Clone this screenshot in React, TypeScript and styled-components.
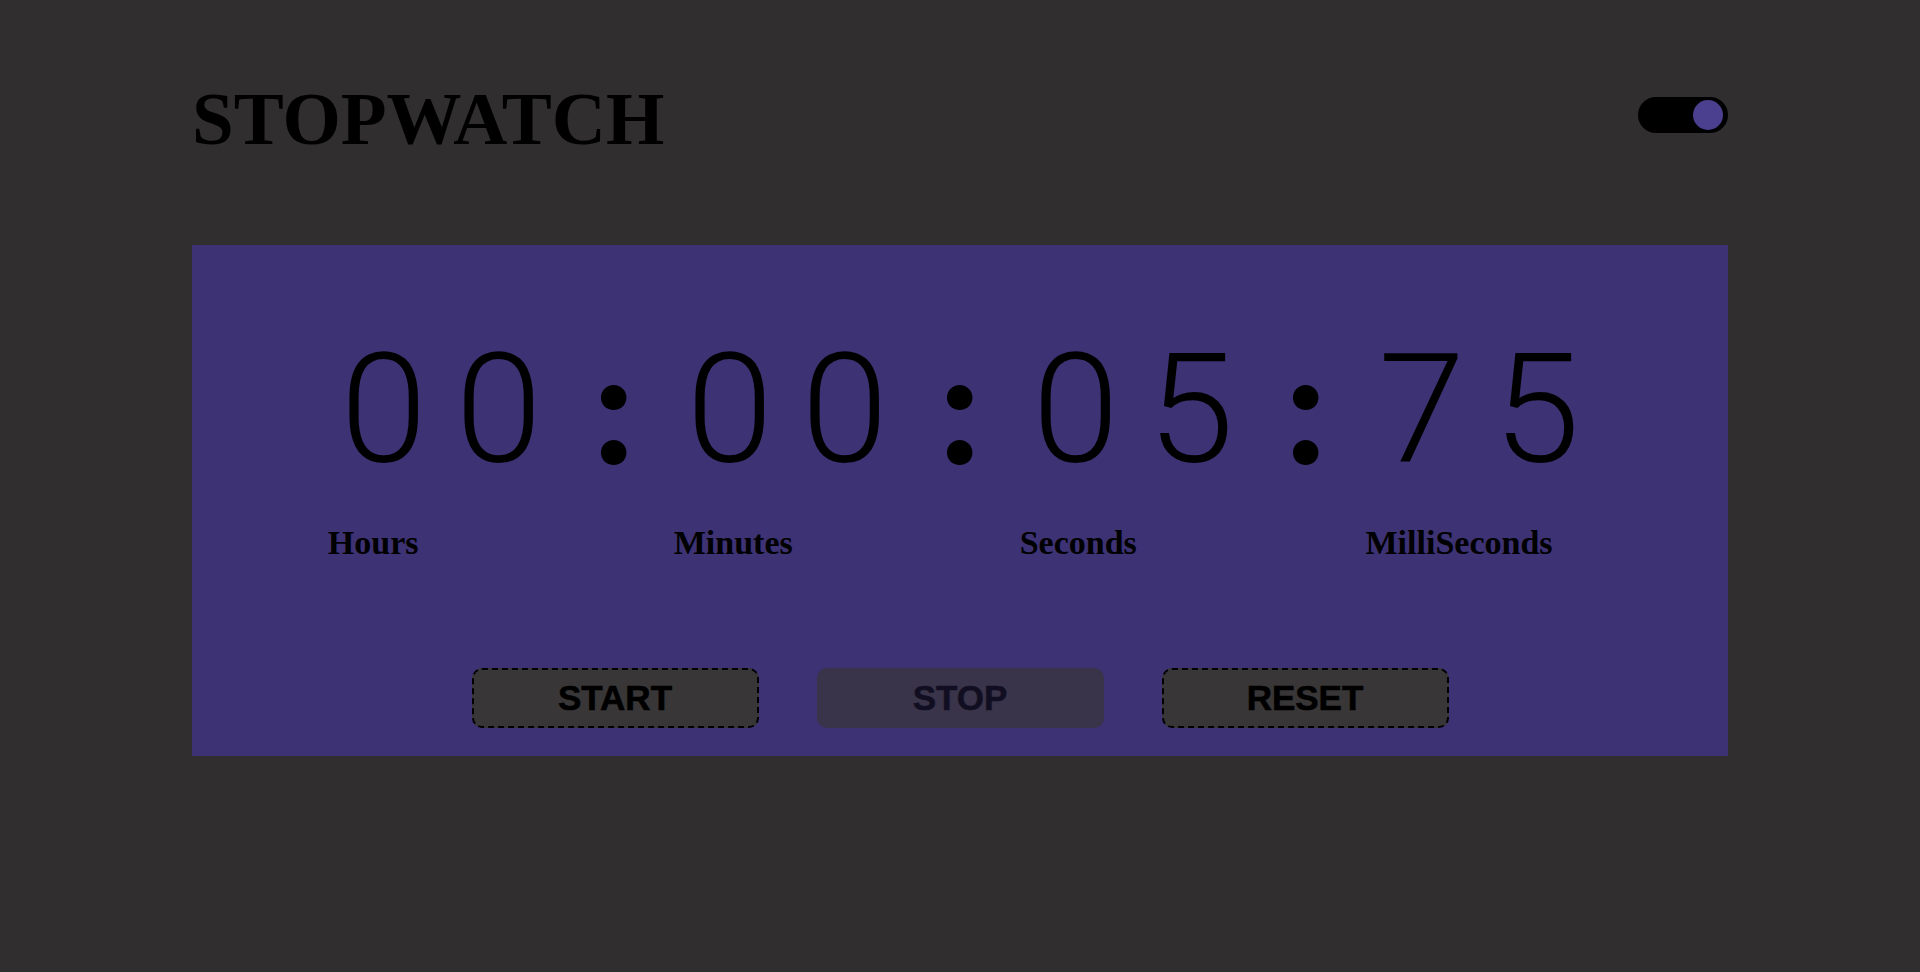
import React from "react";
import styled, { createGlobalStyle } from "styled-components";

const GlobalStyle = createGlobalStyle`
  html, body {
    margin: 0;
    padding: 0;
    background: #302e2f;
  }
  body {
    font-family: "Liberation Serif", "Times New Roman", serif;
  }
`;

const Page = styled.div`
  width: 80%;
  margin: 0 auto;
  padding-top: 76px;
  display: flex;
  flex-direction: column;
  gap: 83px;
`;

const Header = styled.header`
  display: flex;
  align-items: center;
  justify-content: space-between;
`;

const Title = styled.h1`
  margin: 0;
  font-family: "Liberation Serif", "Times New Roman", serif;
  font-weight: 700;
  font-size: 75px;
  line-height: normal;
  color: #000;
`;

const Toggle = styled.div`
  width: 90px;
  height: 36px;
  box-sizing: border-box;
  border-radius: 18px;
  background: #000;
  display: flex;
  align-items: center;
  justify-content: flex-end;
  padding: 0 5px 0 3px;
  margin-top: -8px;
`;

const Knob = styled.span`
  width: 30px;
  height: 30px;
  border-radius: 50%;
  background: #4b3f8f;
`;

const Panel = styled.section`
  height: 511px;
  box-sizing: border-box;
  background: #3c3274;
  display: flex;
  flex-direction: column;
  align-items: center;
  padding-top: 82px;
`;

const TimeRow = styled.div`
  display: flex;
  justify-content: center;
  align-items: flex-start;
`;

const Group = styled.div`
  display: flex;
  flex-direction: column;
  align-items: flex-start;
`;

const Digits = styled.div`
  display: block;
  white-space: nowrap;
  font-family: "Lato", sans-serif;
  font-size: 152px;
  line-height: 1;
`;

const Char = styled.span<{ $colon?: boolean }>`
  display: inline-block;
  width: 115.3px;
  text-align: center;
  font-size: 152px;
  line-height: 1;
  color: #000;
  font-family: ${(p) =>
    p.$colon ? `"Lato", "Roboto", sans-serif` : `"Roboto", "Lato", sans-serif`};
  font-weight: ${(p) => (p.$colon ? 900 : 300)};
  transform: ${(p) => (p.$colon ? "scale(1.03)" : "scaleX(1.03)")};
`;

const Label = styled.div`
  margin-top: 38px;
  padding-left: 2px;
  font-family: "Liberation Serif", "Times New Roman", serif;
  font-weight: 700;
  font-size: 34px;
  line-height: normal;
  color: #000;
`;

const ButtonRow = styled.div`
  margin-top: auto;
  margin-bottom: 28px;
  display: flex;
  gap: 58px;
`;

const Button = styled.button<{ $disabled?: boolean }>`
  width: 287px;
  height: 60px;
  box-sizing: border-box;
  border-radius: 10px;
  border: 2px ${(p) => (p.$disabled ? "solid transparent" : "dashed #000")};
  background: #383637;
  opacity: ${(p) => (p.$disabled ? 0.7 : 1)};
  font-family: "Liberation Sans", Arial, sans-serif;
  font-weight: 700;
  font-size: 35px;
  -webkit-text-stroke: 0.6px #000;
  color: #000;
  padding: 0;
  cursor: pointer;
`;

const groups = [
  { digits: "00:", label: "Hours" },
  { digits: "00:", label: "Minutes" },
  { digits: "05:", label: "Seconds" },
  { digits: "75", label: "MilliSeconds" },
];

export default function App() {
  return (
    <>
      <GlobalStyle />
      <Page>
        <Header>
          <Title>STOPWATCH</Title>
          <Toggle>
            <Knob />
          </Toggle>
        </Header>
        <Panel>
          <TimeRow>
            {groups.map((g) => (
              <Group key={g.label}>
                <Digits>
                  {g.digits.split("").map((c, i) => (
                    <Char key={i} $colon={c === ":"}>
                      {c}
                    </Char>
                  ))}
                </Digits>
                <Label>{g.label}</Label>
              </Group>
            ))}
          </TimeRow>
          <ButtonRow>
            <Button>START</Button>
            <Button $disabled>STOP</Button>
            <Button>RESET</Button>
          </ButtonRow>
        </Panel>
      </Page>
    </>
  );
}
